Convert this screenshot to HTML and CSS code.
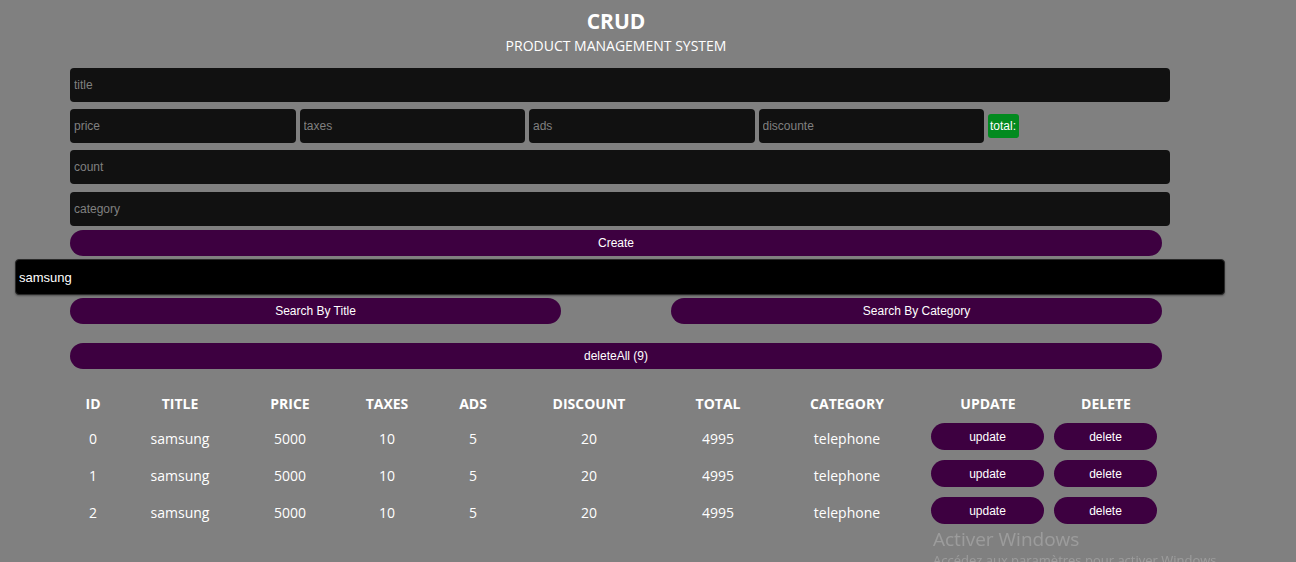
FILE: index.html
```html
<!DOCTYPE html>
<html lang="fr">
<head>
<meta charset="utf-8">
<title>CRUD</title>
<link rel="stylesheet" href="styles.css">
</head>
<body>
<div class="crud">
  <header class="head">
    <h1 class="brand">CRUD</h1>
    <p class="sub">PRODUCT MANAGEMENT SYSTEM</p>
  </header>
  <div class="inputs">
    <input class="field" type="text" placeholder="title">
    <div class="price-row">
      <input class="field small" type="number" placeholder="price">
      <input class="field small" type="number" placeholder="taxes">
      <input class="field small" type="number" placeholder="ads">
      <input class="field small" type="number" placeholder="discounte">
      <small class="total">total:</small>
    </div>
    <input class="field" type="number" placeholder="count">
    <input class="field" type="text" placeholder="category">
    <button class="btn create">Create</button>
  </div>
  <div class="search-wrap">
    <input class="search" type="text" value="samsung">
  </div>
  <div class="search-btns">
    <button class="btn half">Search By Title</button>
    <button class="btn half">Search By Category</button>
  </div>
  <button class="btn delete-all">deleteAll (9)</button>
  <table class="table">
    <colgroup>
      <col style="width:46px"><col style="width:128px"><col style="width:92px"><col style="width:102px"><col style="width:70px"><col style="width:162px"><col style="width:96px"><col style="width:162px"><col style="width:120px"><col style="width:116px">
    </colgroup>
    <thead>
      <tr><th>ID</th><th>TITLE</th><th>PRICE</th><th>TAXES</th><th>ADS</th><th>DISCOUNT</th><th>TOTAL</th><th>CATEGORY</th><th>UPDATE</th><th>DELETE</th></tr>
    </thead>
    <tbody>
      <tr><td>0</td><td>samsung</td><td>5000</td><td>10</td><td>5</td><td>20</td><td>4995</td><td>telephone</td><td class="act"><button class="btn row-btn upd">update</button></td><td class="act"><button class="btn row-btn del">delete</button></td></tr>
      <tr><td>1</td><td>samsung</td><td>5000</td><td>10</td><td>5</td><td>20</td><td>4995</td><td>telephone</td><td class="act"><button class="btn row-btn upd">update</button></td><td class="act"><button class="btn row-btn del">delete</button></td></tr>
      <tr><td>2</td><td>samsung</td><td>5000</td><td>10</td><td>5</td><td>20</td><td>4995</td><td>telephone</td><td class="act"><button class="btn row-btn upd">update</button></td><td class="act"><button class="btn row-btn del">delete</button></td></tr>
    </tbody>
  </table>
</div>
<div class="watermark">
  <div class="wm-title">Activer Windows</div>
  <div class="wm-sub">Accédez aux paramètres pour activer Windows.</div>
</div>
</body>
</html>
```

FILE: styles.css
```css
* { box-sizing: border-box; }
html, body { margin: 0; padding: 0; }
body {
  background: #808080;
  font-family: "Open Sans", "Noto Sans", sans-serif;
  color: #fff;
  height: 562px;
  overflow: hidden;
}
.crud {
  margin-left: 70px;
  width: 1092px;
}
.head {
  text-align: center;
  padding-top: 8px;
}
.brand {
  margin: 0;
  font-size: 21px;
  line-height: 26px;
  font-weight: 700;
}
.sub {
  margin: 3px 0 0;
  font-size: 14px;
  line-height: 18px;
}
.inputs {
  margin-top: 13px;
  display: flex;
  flex-direction: column;
  align-items: flex-start;
}
.field {
  display: block;
  width: 1100px;
  height: 34px;
  background: #111;
  border: none;
  border-radius: 4px;
  color: #fff;
  padding: 0 4px;
  font-family: "Liberation Sans", Arial, sans-serif;
  font-size: 12px;
  outline: none;
  margin-bottom: 7px;
  -moz-appearance: textfield;
}
.field::placeholder { color: #808080; }
.field::-webkit-outer-spin-button,
.field::-webkit-inner-spin-button { -webkit-appearance: none; margin: 0; }
.price-row {
  display: flex;
  align-items: center;
  gap: 4px;
  margin-bottom: 7px;
}
.price-row .field.small {
  width: 225.5px;
  margin: 0;
}
.total {
  display: inline-block;
  background: #028a1f;
  border-radius: 3px;
  height: 24px;
  width: 31px;
  line-height: 24px;
  padding: 0 2px;
  font-family: "Liberation Sans", Arial, sans-serif;
  font-size: 12px;
  color: #fff;
  overflow: hidden;
}
.inputs > .field:nth-of-type(2) { margin-bottom: 8px; }
.inputs > .field:last-of-type { margin-bottom: 4px; }
.btn {
  display: block;
  background: #3d0040;
  color: #fff;
  border: none;
  border-radius: 20px;
  height: 26px;
  font-family: "Liberation Sans", Arial, sans-serif;
  font-size: 12px;
  cursor: pointer;
  padding: 0;
}
.create { width: 1092px; }
.search-wrap {
  margin: 3px 0 0 -55px;
}
.search {
  display: block;
  width: 1210px;
  height: 36px;
  background: #000;
  border: 1px solid #2a2a2a;
  border-radius: 4px;
  color: #fff;
  font-family: "Liberation Sans", Arial, sans-serif;
  font-size: 13px;
  padding: 0 3px;
  outline: none;
  box-shadow: 0 1px 2px rgba(0,0,0,0.35);
}
.search-btns {
  display: flex;
  justify-content: space-between;
  margin-top: 3px;
}
.half { width: 491px; }
.delete-all {
  width: 1092px;
  margin-top: 19px;
}
.table {
  margin-top: 20px;
  border-collapse: collapse;
  table-layout: fixed;
  width: 1094px;
  text-align: center;
}
.table th {
  font-size: 14px;
  font-weight: 700;
  line-height: 19px;
  padding: 5px 0;
}
.table td {
  font-size: 14px;
  line-height: 19px;
  padding: 7px 0 3px;
  height: 37px;
}
.table td.act {
  padding: 5px 0 5px;
}
.row-btn {
  height: 27px;
  margin: 0 auto;
}
.upd { width: 113px; margin-left: 3px; }
.del { width: 103px; margin-left: 6px; }
.watermark {
  position: fixed;
  left: 933px;
  top: 527px;
  color: rgba(255,255,255,0.22);
  font-family: "Open Sans", "Noto Sans", sans-serif;
  white-space: nowrap;
}
.wm-title {
  font-size: 19px;
  line-height: 24px;
}
.wm-sub {
  font-size: 13px;
  line-height: 18px;
}
```
